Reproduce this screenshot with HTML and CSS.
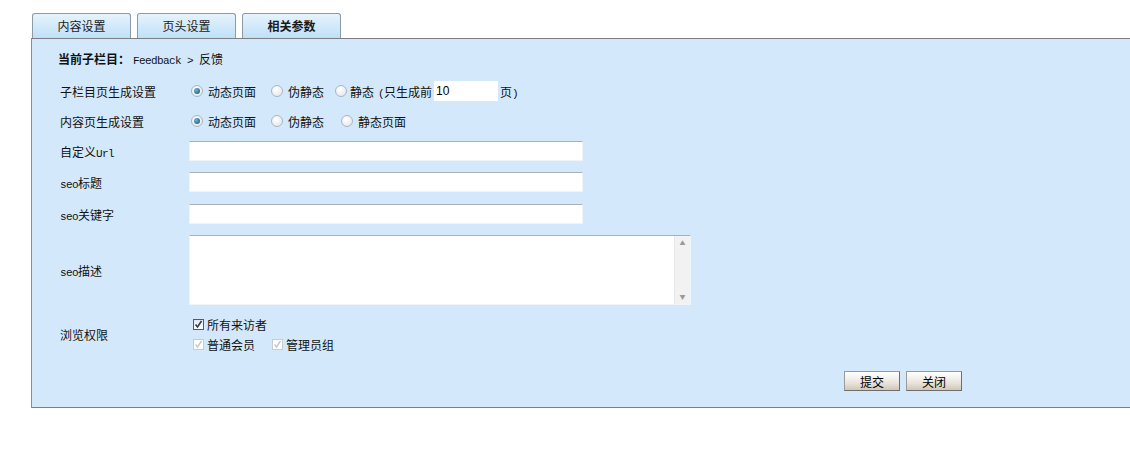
FILE: index.html
```html
<!DOCTYPE html>
<html lang="zh-CN">
<head>
    <meta charset="UTF-8">
    <title>栏目设置</title>
    <link rel="stylesheet" href="styles.css">
</head>
<body>
    <div class="tabs">
        <div class="tab">内容设置</div>
        <div class="tab">页头设置</div>
        <div class="tab active">相关参数</div>
    </div>
    <div class="panel">
        <div class="crumb"><b>当前子栏目：</b><span class="en">Feedback &gt; </span>反馈</div>

        <div class="row">
            <div class="label">子栏目页生成设置</div>
            <div class="field">
                <span class="radio checked"></span><span class="opt">动态页面</span>
                <span class="radio"></span><span class="opt opt-near">伪静态</span>
                <span class="radio radio-tight"></span><span class="opt opt-tight">静态</span>
                <span><span class="en">(</span>只生成前</span><input type="text" class="small-input" value="10"><span>页<span class="en">)</span></span>
            </div>
        </div>
        <div class="row">
            <div class="label">内容页生成设置</div>
            <div class="field">
                <span class="radio checked"></span><span class="opt">动态页面</span>
                <span class="radio"></span><span class="opt opt-wide">伪静态</span>
                <span class="radio"></span><span class="opt">静态页面</span>
            </div>
        </div>
        <div class="row">
            <div class="label">自定义<span class="en">Url</span></div>
            <div class="field"><input type="text" class="text-input"></div>
        </div>
        <div class="row row-tall">
            <div class="label"><span class="en">seo</span>标题</div>
            <div class="field"><input type="text" class="text-input"></div>
        </div>
        <div class="row row-tall">
            <div class="label"><span class="en">seo</span>关键字</div>
            <div class="field"><input type="text" class="text-input"></div>
        </div>
        <div class="row row-area">
            <div class="label"><span class="en">seo</span>描述</div>
            <div class="field">
                <div class="area-wrap">
                    <textarea class="area"></textarea>
                    <div class="scroll">
                        <span class="arrow">&#9650;</span>
                        <span class="arrow">&#9660;</span>
                    </div>
                </div>
            </div>
        </div>
        <div class="row row-checks">
            <div class="label">浏览权限</div>
            <div class="field checks">
                <div class="check-line">
                    <span class="box on"><svg width="9" height="9" viewBox="0 0 9 9"><path d="M1.5 4.5 L3.5 7 L7.5 1" fill="none" stroke="#24405e" stroke-width="1.6"/></svg></span><span>所有来访者</span>
                </div>
                <div class="check-line">
                    <span class="box off"><svg width="9" height="9" viewBox="0 0 9 9"><path d="M1.5 4.5 L3.5 7 L7.5 1" fill="none" stroke="#c2c8cf" stroke-width="1.4"/></svg></span><span class="opt">普通会员</span>
                    <span class="box off"><svg width="9" height="9" viewBox="0 0 9 9"><path d="M1.5 4.5 L3.5 7 L7.5 1" fill="none" stroke="#c2c8cf" stroke-width="1.4"/></svg></span><span>管理员组</span>
                </div>
            </div>
        </div>
        <div class="actions">
            <button class="btn">提交</button>
            <button class="btn">关闭</button>
        </div>
    </div>
</body>
</html>
```

FILE: styles.css
```css
html, body {
    overflow: hidden;
}
body {
    margin: 0;
    padding: 13px 0 0 31px;
    font-family: "Noto Sans CJK SC", "Liberation Sans", sans-serif;
    font-size: 12px;
    color: #111;
    background: #fff;
}
.en {
    font-family: "Liberation Mono", monospace;
    font-size: 11px;
    letter-spacing: -0.6px;
    white-space: pre;
}
.tabs {
    display: flex;
    gap: 6px;
    margin-left: 1px;
}
.tab {
    width: 97px;
    height: 24px;
    line-height: 24px;
    text-align: center;
    border: 1px solid #8e9aa6;
    border-bottom: none;
    border-radius: 3px 3px 0 0;
    background: linear-gradient(#e6f3fd, #bfe0f7);
    color: #1a1a1a;
}
.tab.active {
    font-weight: bold;
}
.panel {
    background: #d3e9fb;
    border-top: 1px solid #7b7f84;
    border-left: 1px solid #8a8e92;
    border-bottom: 1px solid #7b7f84;
    padding: 10px 0 16px 28px;
}
.crumb {
    height: 20px;
    line-height: 20px;
    margin-left: -2px;
    margin-bottom: 7px;
}
.crumb b {
    margin-right: 3px;
}
.row {
    display: flex;
    align-items: center;
    height: 30px;
}
.row-tall {
    height: 32px;
}
.row-area {
    height: 80px;
}
.row-checks {
    height: 48px;
}
.label {
    width: 129px;
    flex-shrink: 0;
}
.field {
    display: flex;
    align-items: center;
}
.radio {
    width: 10px;
    height: 10px;
    margin: 0 5px 0 2px;
    border-radius: 50%;
    border: 1px solid #aab6c2;
    background: radial-gradient(circle at 40% 35%, #ffffff, #dde3e9);
    position: relative;
}
.radio.checked::after {
    content: "";
    position: absolute;
    left: 2px;
    top: 2px;
    width: 6px;
    height: 6px;
    border-radius: 50%;
    background: radial-gradient(circle at 35% 35%, #6fb7d6, #0e4f72);
}
.opt {
    margin-right: 13px;
}
.opt-near {
    margin-right: 11px;
}
.opt-wide {
    margin-right: 15px;
}
.radio-tight {
    margin-left: 0;
    margin-right: 3px;
}
.opt-tight {
    margin-right: 4px;
}
.small-input {
    width: 64px;
    height: 20px;
    box-sizing: border-box;
    margin: 0 2px;
    padding: 0 2px;
    border: none;
    background: #fff;
    font-family: "Liberation Sans", sans-serif;
    font-size: 12px;
    color: #000;
}
.text-input {
    width: 394px;
    height: 20px;
    box-sizing: border-box;
    border: 1px solid #eef4fa;
    border-top-color: #a9b0b8;
    background: #fff;
    margin: 0;
}
.area-wrap {
    display: flex;
    width: 502px;
    height: 70px;
    box-sizing: border-box;
    border: 1px solid #eef4fa;
    border-top-color: #a9b0b8;
    background: #fff;
}
.area {
    flex: 1;
    border: none;
    resize: none;
    margin: 0;
    padding: 0;
    outline: none;
}
.scroll {
    width: 15px;
    background: #f2f2f2;
    border-left: 1px solid #e8e8e8;
    display: flex;
    flex-direction: column;
    justify-content: space-between;
    align-items: center;
    padding: 3px 0;
}
.arrow {
    font-size: 6px;
    line-height: 8px;
    color: #9a9a9a;
}
.checks {
    flex-direction: column;
    align-items: flex-start;
}
.check-line {
    display: flex;
    align-items: center;
    height: 20px;
}
.box {
    width: 11px;
    height: 11px;
    box-sizing: border-box;
    margin: 0 3px 0 4px;
    display: flex;
    align-items: center;
    justify-content: center;
    background: #fff;
}
.box.on {
    border: 1px solid #3a5f8a;
    background: linear-gradient(#e4e8ee, #ffffff);
}
.box.off {
    border: 1px solid #c6ccd2;
}
.actions {
    width: 902px;
    margin-top: 13px;
    display: flex;
    justify-content: flex-end;
    gap: 6px;
}
.btn {
    width: 56px;
    height: 20px;
    padding: 0;
    border: 1px solid #6e6e6e;
    border-top-color: #9a9a9a;
    border-left-color: #9a9a9a;
    background: linear-gradient(#ffffff, #e9e5dc 60%, #cfc7b6);
    font-family: "Noto Sans CJK SC", sans-serif;
    font-size: 12px;
    color: #000;
}
```
